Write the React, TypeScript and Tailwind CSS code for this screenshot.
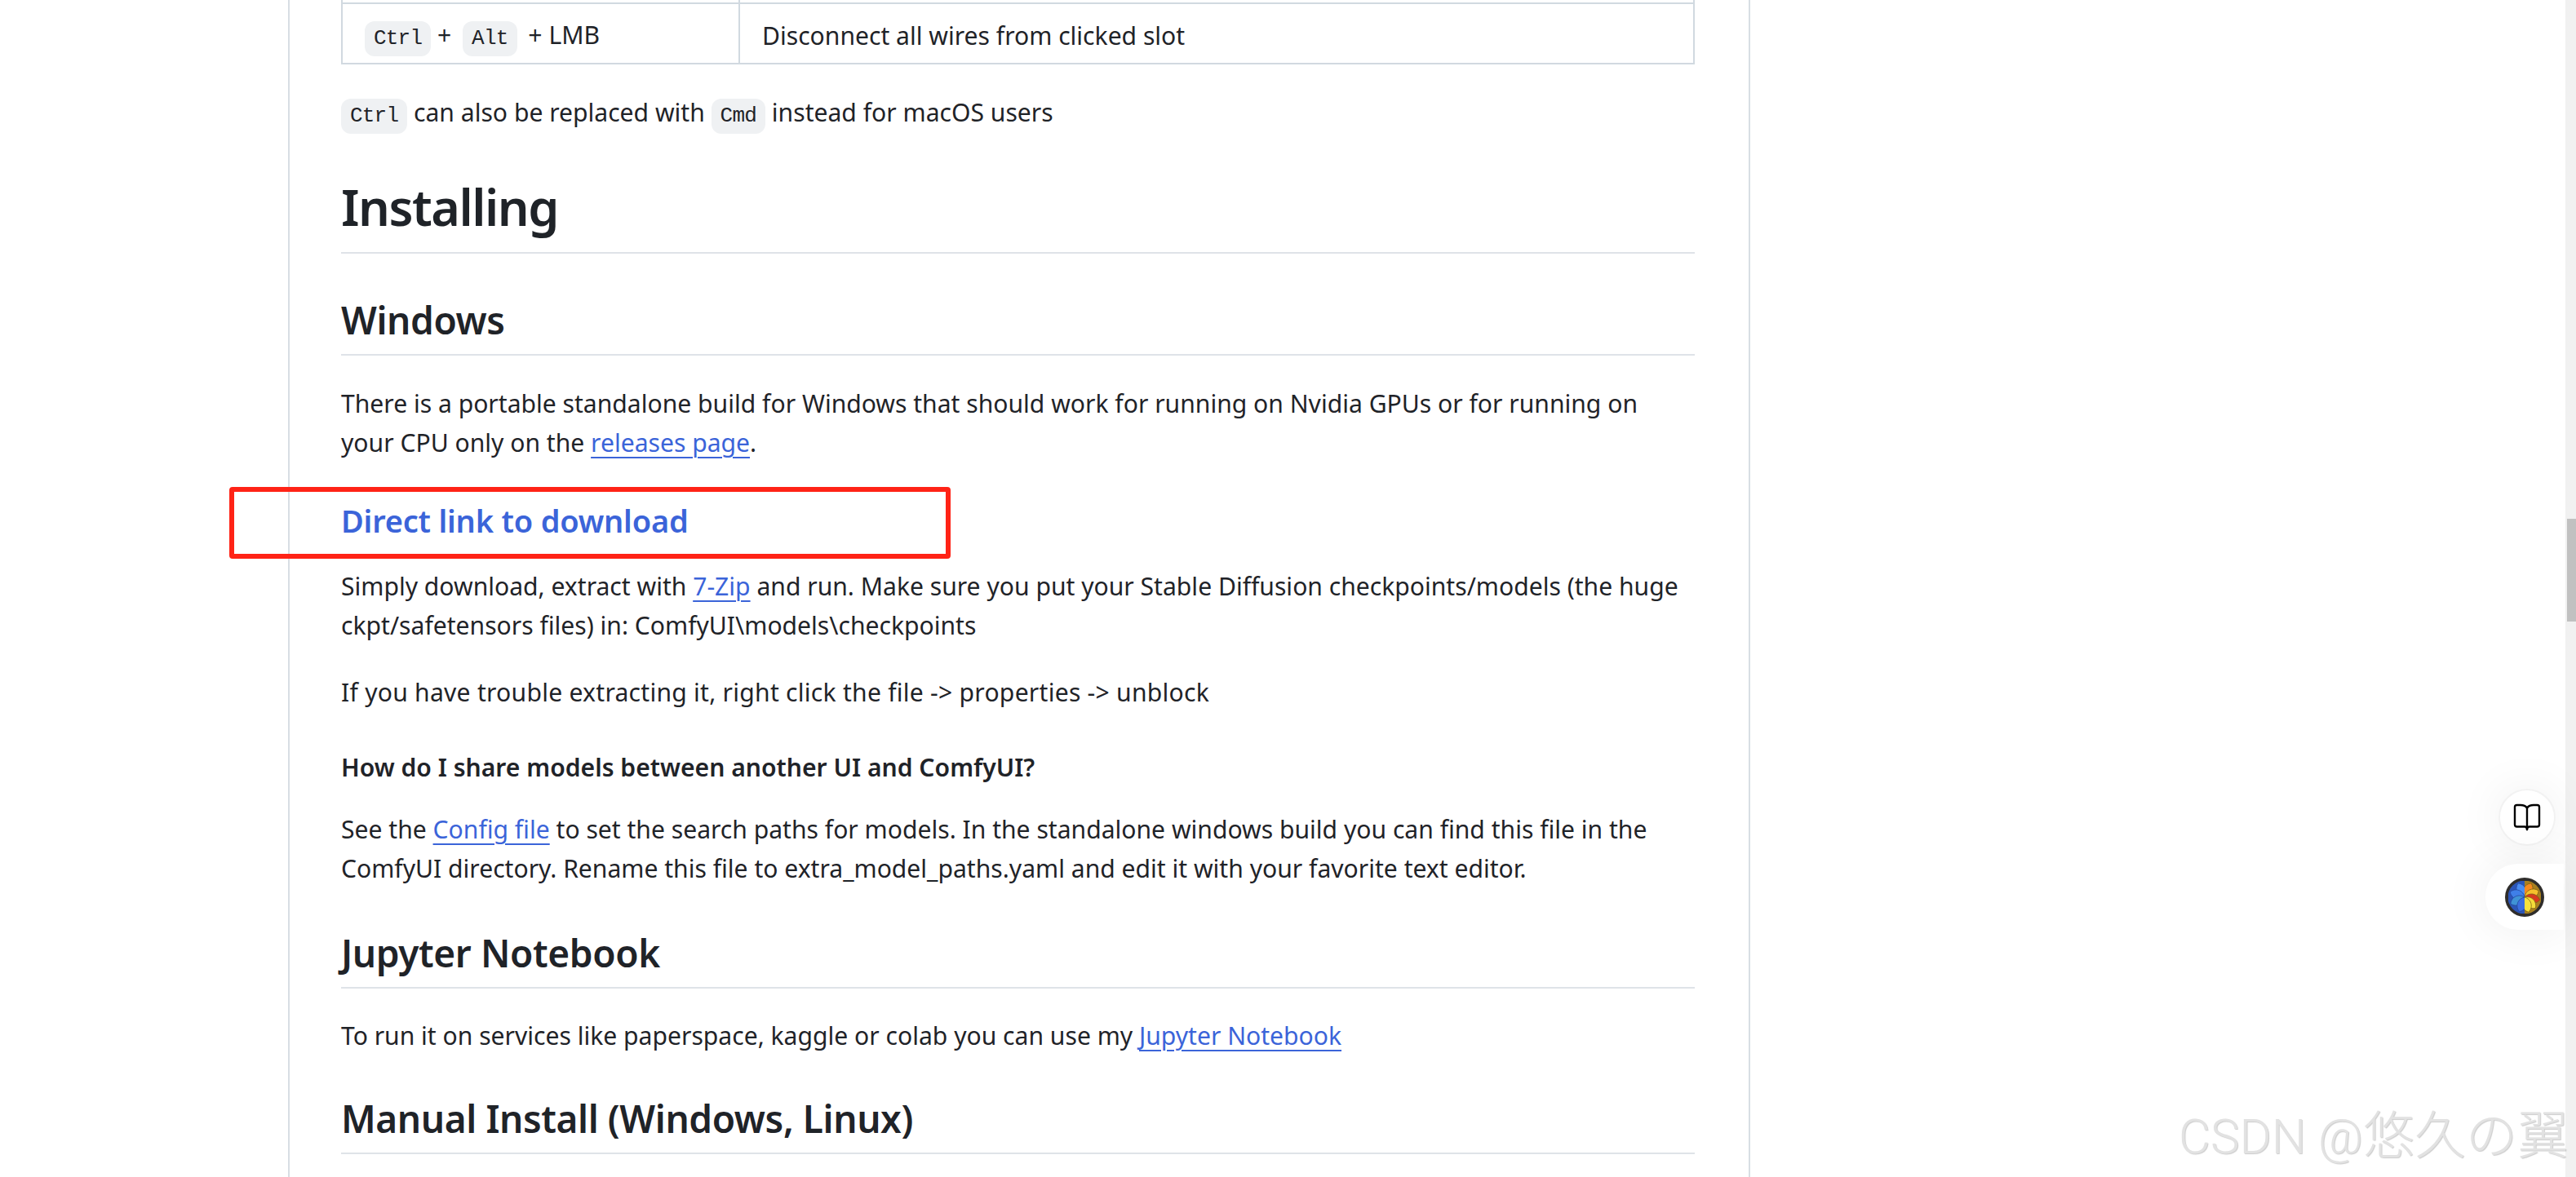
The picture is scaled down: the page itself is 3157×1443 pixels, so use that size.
import { clsx } from "clsx";

const Code = ({ children, className }: { children: string; className?: string }) => (
  <code
    className={clsx(
      "inline-block rounded-[12px] bg-[#eff1f3] px-[11px] font-['Liberation_Mono','DejaVu_Sans_Mono',monospace] text-[26px] leading-[43px] tracking-[-0.8px] text-[#1f2328]",
      className,
    )}
  >
    {children}
  </code>
);

const Link = ({ children }: { children: string }) => (
  <a className="text-[#3b64d9] underline decoration-2 underline-offset-[6px]">{children}</a>
);

const H2 = ({ children, className }: { children: string; className: string }) => (
  <h2 className={clsx("border-b-2 border-[#dfe3e8] pb-[17px] text-[46px] font-semibold leading-[50px] tracking-[-0.4px]", className)}>
    {children}
  </h2>
);

const PETAL = "M24 24C17 20 16 10 24 5C32 10 31 20 24 24z";

const leftPetals = [
  { angle: -25, fill: "#4a8cf2" },
  { angle: -70, fill: "#3f7fe8" },
  { angle: -115, fill: "#3f92d6" },
  { angle: -160, fill: "#3c6fe0" },
];

const rightPetals = [
  { angle: 25, fill: "#f58a1f" },
  { angle: 65, fill: "#f6c02c" },
  { angle: 100, fill: "#d8391f" },
  { angle: 135, fill: "#f4dc3a" },
  { angle: 165, fill: "#f7e23c" },
];

const BrainIcon = () => (
  <svg viewBox="0 0 48 48" className="h-[48px] w-[48px]">
    <defs>
      <clipPath id="brain-left">
        <rect x="4" y="4" width="20" height="40" />
      </clipPath>
      <clipPath id="brain-right">
        <rect x="24" y="4" width="20" height="40" />
      </clipPath>
    </defs>
    <circle cx="24" cy="24" r="24" fill="#2f2d2b" />
    <g clipPath="url(#brain-left)">
      <circle cx="24" cy="24" r="20.500" fill="#2b55b8" />
      {leftPetals.map((p) => (
        <path key={p.angle} d={PETAL} fill={p.fill} stroke="#24479a" strokeWidth="0.7" transform={`rotate(${p.angle} 24 24)`} />
      ))}
    </g>
    <g clipPath="url(#brain-right)">
      <circle cx="24" cy="24" r="20.500" fill="#a8801f" />
      {rightPetals.map((p) => (
        <path key={p.angle} d={PETAL} fill={p.fill} stroke="#7a5c14" strokeWidth="0.7" transform={`rotate(${p.angle} 24 24)`} />
      ))}
    </g>
  </svg>
);

export default function App() {
  return (
    <div className="relative flex h-[1443px] w-[3157px] overflow-hidden bg-white font-['Noto_Sans','Noto_Sans_CJK_SC',sans-serif] text-[30.1px] leading-[48px] text-[#1f2328]">
      <main className="min-w-0 flex-1">
        <article className="ml-[353px] h-[1443px] w-[1792px] border-x-2 border-[#d8dee4] pl-[63px] pr-[66px]">
          <table className="w-[1659px] border-collapse">
            <tbody>
              <tr>
                <td className="h-[4px] border-x-2 border-b-2 border-[#d1d9e0] p-0" />
                <td className="h-[4px] border-x-2 border-b-2 border-[#d1d9e0] p-0" />
              </tr>
              <tr>
                <td className="h-[74px] w-[487px] whitespace-nowrap border-2 border-t-0 border-[#d1d9e0] px-[27px] pb-0 pt-[6px]">
                  <Code>Ctrl</Code> + <Code className="ml-[6px] mr-[6px]">Alt</Code> + LMB
                </td>
                <td className="h-[74px] border-2 border-t-0 border-[#d1d9e0] px-[27px] pb-0 pt-[6px]">
                  Disconnect all wires from clicked slot
                </td>
              </tr>
            </tbody>
          </table>

          <p className="mt-[35px]">
            <Code>Ctrl</Code> can also be replaced with <Code>Cmd</Code> instead for macOS users
          </p>

          <h1 className="mt-[50px] border-b-2 border-[#dfe3e8] pb-[15px] text-[61px] font-semibold leading-[80px] tracking-[-1.5px]">
            Installing
          </h1>

          <H2 className="mt-[56px]">Windows</H2>

          <p className="mt-[35px]">
            There is a portable standalone build for Windows that should work for running on Nvidia GPUs or for running on
            <br />
            your CPU only on the <Link>releases page</Link>.
          </p>

          <h3 className="mt-[46px] text-[38px] font-semibold leading-[50px] tracking-[-0.2px] text-[#3b64d9]">Direct link to download</h3>

          <p className="mt-[32px]">
            Simply download, extract with <Link>7-Zip</Link> and run. Make sure you put your Stable Diffusion checkpoints/models (the huge
            <br />
            ckpt/safetensors files) in: ComfyUI\models\checkpoints
          </p>

          <p className="mt-[34px] tracking-[0.25px]">If you have trouble extracting it, right click the file -&gt; properties -&gt; unblock</p>

          <h4 className="mt-[48px] font-semibold leading-[40px]">How do I share models between another UI and ComfyUI?</h4>

          <p className="mt-[32px]">
            See the <Link>Config file</Link> to set the search paths for models. In the standalone windows build you can find this file in the
            <br />
            ComfyUI directory. Rename this file to extra_model_paths.yaml and edit it with your favorite text editor.
          </p>

          <H2 className="mt-[54px]">Jupyter Notebook</H2>

          <p className="mt-[34px]">
            To run it on services like paperspace, kaggle or colab you can use my <Link>Jupyter Notebook</Link>
          </p>

          <H2 className="mt-[52px]">Manual Install (Windows, Linux)</H2>
        </article>
      </main>

      {/* scrollbar */}
      <div className="w-[13px] shrink-0 bg-[#f1f1f1] pl-[2px] pt-[636px]">
        <div className="h-[126px] bg-[#c1c1c1]" />
      </div>

      {/* annotation box */}
      <div className="absolute left-[281px] top-[597px] h-[88px] w-[884px] rounded-[4px] border-[6px] border-[#ff2316]" />

      {/* floating buttons */}
      <div className="absolute left-[3062px] top-[967px] flex h-[70px] w-[70px] items-center justify-center rounded-full border-2 border-[#f2f2f2] bg-white shadow-[0_0_60px_rgba(0,0,0,0.07)]">
        <svg viewBox="0 0 34 34" className="h-[34px] w-[34px]" fill="none" stroke="#000" strokeWidth="2.4" strokeLinejoin="round" strokeLinecap="round">
          <path d="M17 5.500C15 2.500 12 2 9 2H4.500C3 2 2 3 2 4.500V26c0 1.500 1 2.500 2.500 2.500H14c1.800 0 3 .8 3 3.500 0-2.700 1.200-3.500 3-3.500h9.500c1.500 0 2.500-1 2.500-2.500V4.500C32 3 31 2 29.500 2H25c-3 0-6 .5-8 3.500z" />
          <path d="M17 5.500V32" />
        </svg>
      </div>
      <div className="absolute left-[3046px] top-[1059px] flex h-[81px] w-[96px] items-center rounded-l-[40px] bg-white pl-[24px] shadow-[0_0_60px_rgba(0,0,0,0.07)]">
        <BrainIcon />
      </div>

      {/* watermark */}
      <div className="absolute left-[2670px] top-[1347px] whitespace-nowrap font-['Roboto','Noto_Sans_CJK_JP',sans-serif] text-[60px] font-light leading-[80px] text-[#e2e2e2] [text-shadow:1px_1px_1px_rgba(0,0,0,0.2)]">
        CSDN @<span className="font-['Noto_Sans_CJK_JP',sans-serif] text-[63px] font-light">悠久の翼</span>
      </div>
    </div>
  );
}
